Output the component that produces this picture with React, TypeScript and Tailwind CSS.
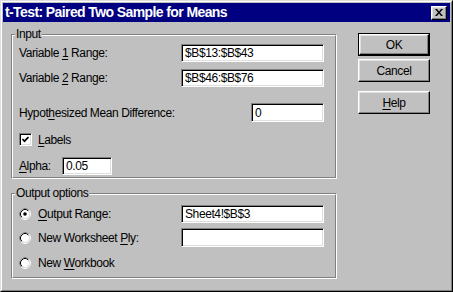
import type { ReactNode } from 'react'

const sunken =
  'border border-t-[#808080] border-l-[#808080] border-r-white border-b-white shadow-[inset_1px_1px_0_#000,inset_-1px_-1px_0_#dfdfdf] bg-white'
const raised =
  'border border-t-white border-l-white border-r-black border-b-black shadow-[inset_-1px_-1px_0_#808080,inset_1px_1px_0_#dfdfdf] bg-[#c0c0c0]'

function U({ children }: { children: ReactNode }) {
  return <span className="underline underline-offset-[2px]">{children}</span>
}

function Field({ value, className }: { value?: string; className: string }) {
  return (
    <div className={`${sunken} ${className} flex items-center pl-[3px] leading-none whitespace-nowrap`}>
      {value}
    </div>
  )
}

function Group({ label, className, children }: { label: string; className: string; children: ReactNode }) {
  return (
    <div className={`relative border border-t-[#808080] border-l-[#808080] border-r-white border-b-white ${className}`}>
      <span className="absolute left-[3px] top-[-8px] bg-[#c0c0c0] px-px leading-[14px]">{label}</span>
      <div className="h-full border border-t-white border-l-white border-r-[#808080] border-b-[#808080] pl-[6px] pr-[11px]">
        {children}
      </div>
    </div>
  )
}

function Radio({ checked }: { checked?: boolean }) {
  return (
    <svg width="12" height="12" viewBox="0 0 12 12" className="shrink-0">
      <circle cx="6" cy="6" r="5.5" fill="none" stroke="#fff" />
      <path d="M2.11 9.89 A5.5 5.5 0 0 1 9.89 2.11" fill="none" stroke="#808080" />
      <circle cx="6" cy="6" r="4.5" fill="#fff" stroke="#dfdfdf" />
      <path d="M2.82 9.18 A4.5 4.5 0 0 1 9.18 2.82" fill="none" stroke="#000" />
      {checked && <circle cx="6" cy="6" r="1.8" fill="#000" />}
    </svg>
  )
}

function Button({ children, isDefault, className = '' }: { children: ReactNode; isDefault?: boolean; className?: string }) {
  if (isDefault) {
    return (
      <div className={`w-[72px] h-[23px] border border-black flex ${className}`}>
        <div className={`${raised} flex-1 flex items-center justify-center`}>{children}</div>
      </div>
    )
  }
  return (
    <div className={`${raised} w-[72px] h-[23px] flex items-center justify-center ${className}`}>{children}</div>
  )
}

export default function App() {
  return (
    <div className="w-[453px] h-[292px] bg-[#c0c0c0] border border-t-[#dfdfdf] border-l-[#dfdfdf] border-r-black border-b-black font-['Liberation_Sans',Arial,sans-serif] text-[12px] tracking-[-0.4px] text-black">
      <div className="h-full border border-t-white border-l-white border-r-[#808080] border-b-[#808080] p-px flex flex-col">
        {/* title bar */}
        <div className="h-[19px] bg-[#000080] flex items-center justify-between pl-[2px] pr-[3px]">
          <span className="text-white font-bold text-[14px] tracking-[-0.6px]">t-Test: Paired Two Sample for Means</span>
          <div className={`${raised} w-[16px] h-[14px] flex items-center justify-center`}>
            <svg width="8" height="7" viewBox="0 0 8 7">
              <path d="M0 0h2l2 2.5 2-2.5h2l-3 3.5 3 3.5h-2l-2-2.5-2 2.5h-2l3-3.5z" fill="#000" />
            </svg>
          </div>
        </div>

        <div className="flex pl-[8px]">
          <div className="w-[326px] mt-[12px]">
            <Group label="Input" className="h-[145px]">
              <div className="mt-[8px] h-[18px] flex items-center justify-between">
                <span>Variable <U>1</U> Range:</span>
                <Field value="$B$13:$B$43" className="w-[143px] h-[18px]" />
              </div>
              <div className="mt-[7px] h-[18px] flex items-center justify-between">
                <span>Variable <U>2</U> Range:</span>
                <Field value="$B$46:$B$76" className="w-[143px] h-[18px]" />
              </div>
              <div className="mt-[16px] h-[19px] flex items-center justify-between">
                <span>Hypot<U>h</U>esized Mean Difference:</span>
                <Field value="0" className="w-[73px] h-[19px]" />
              </div>
              <div className="mt-[11px] h-[13px] flex items-center">
                <div className={`${sunken} w-[13px] h-[13px] flex items-center justify-center`}>
                  <svg width="7" height="7" viewBox="0 0 7 7">
                    <polyline points="0.5,3 2.5,5.2 6.5,1" fill="none" stroke="#000" strokeWidth="1.7" />
                  </svg>
                </div>
                <span className="ml-[6px]"><U>L</U>abels</span>
              </div>
              <div className="mt-[11px] h-[18px] flex items-center">
                <span className="w-[43px]"><U>A</U>lpha:</span>
                <Field value="0.05" className="w-[50px] h-[18px]" />
              </div>
            </Group>

            <Group label="Output options" className="mt-[14px] h-[86px]">
              <div className="mt-[10px] h-[18px] flex items-center justify-between">
                <div className="flex items-center gap-[7px]">
                  <Radio checked />
                  <span><U>O</U>utput Range:</span>
                </div>
                <Field value="Sheet4!$B$3" className="w-[143px] h-[18px]" />
              </div>
              <div className="mt-[5px] h-[19px] flex items-center justify-between">
                <div className="flex items-center gap-[7px]">
                  <Radio />
                  <span>New Worksheet <U>P</U>ly:</span>
                </div>
                <Field className="w-[143px] h-[19px]" />
              </div>
              <div className="mt-[7px] h-[18px] flex items-center gap-[7px]">
                <Radio />
                <span>New <U>W</U>orkbook</span>
              </div>
            </Group>
          </div>

          <div className="ml-[21px] mt-[11px] flex flex-col">
            <Button isDefault>OK</Button>
            <Button className="mt-[3px]">Cancel</Button>
            <Button className="mt-[9px]"><U>H</U>elp</Button>
          </div>
        </div>
      </div>
    </div>
  )
}
